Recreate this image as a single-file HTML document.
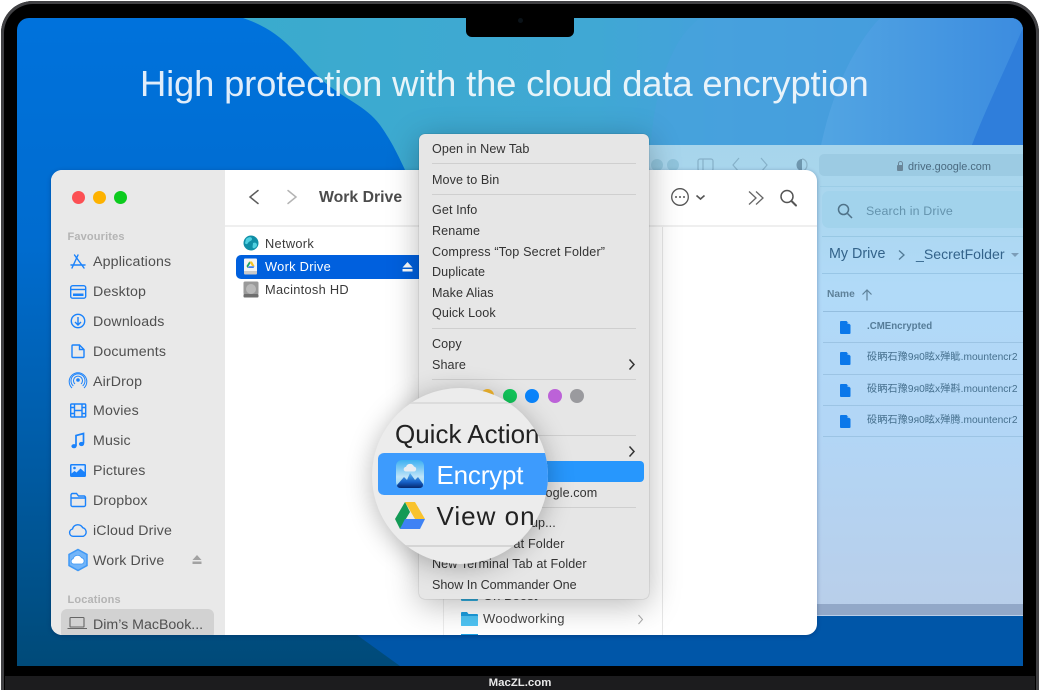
<!DOCTYPE html>
<html><head><meta charset="utf-8"><style>
html,body{margin:0;padding:0;background:#fff}
#p{position:relative;width:1040px;height:690px;overflow:hidden;background:#fff;font-family:"Liberation Sans","Noto Sans CJK SC",sans-serif;filter:blur(.3px)}
#p div,#p svg{position:absolute}
.t{white-space:nowrap;line-height:20px;height:20px}
.s{left:93px;font-size:14.2px;color:#505050;letter-spacing:.15px}
.m{left:432px;font-size:12.6px;color:#333;letter-spacing:.07px}
.l{left:432px;width:204px;height:1px;background:#cfcfcf}
.f{left:867px;font-size:10.3px;color:#46708e}
.c{font-size:12.8px;color:#3a3a3a;left:265px;letter-spacing:.3px}
</style></head><body><div id="p">

<div style="left:1px;top:1px;width:1038px;height:700px;background:#000;border-radius:32px 32px 0 0;box-shadow:inset 0 0 0 3px #414144"></div>
<div style="left:5px;top:676px;width:1030px;height:14px;background:#1c1c1e"></div>
<div class="t" style="left:0;width:1040px;text-align:center;top:673px;color:#e8e8e8;font-size:11.4px;font-weight:bold">MacZL.com</div>

<svg style="left:17px;top:18px;border-radius:12px 12px 0 0" width="1006" height="648" viewBox="17 18 1006 648">
<defs>
<linearGradient id="a" x1="0" y1="0" x2="0" y2="1"><stop offset="0" stop-color="#0072dc"/><stop offset=".35" stop-color="#006ccf"/><stop offset=".65" stop-color="#005da9"/><stop offset="1" stop-color="#004a78"/></linearGradient>
<linearGradient id="b" x1="0" y1="0" x2="1" y2="0"><stop offset="0" stop-color="#3aabcd"/><stop offset=".45" stop-color="#40a8d4"/><stop offset=".62" stop-color="#44a0dc"/><stop offset="1" stop-color="#3a8ede"/></linearGradient>
<linearGradient id="g" x1="0" y1="0" x2="1" y2="0"><stop offset="0" stop-color="#52a5e2"/><stop offset="1" stop-color="#3c8ce0"/></linearGradient>
</defs>
<rect x="17" y="18" width="1006" height="648" fill="url(#a)"/>
<path d="M243 18C285 32 298 58 322 80C345 100 365 105 380 125C392 142 398 155 406 172L1023 172V18Z" fill="url(#b)"/>
<path d="M700 18C670 40 655 90 650 150H820C830 100 850 50 880 18Z" fill="#4aa2de" opacity=".6"/>
<path d="M880 18C850 50 830 100 820 150H970C985 110 1005 70 1023 30V18Z" fill="url(#g)"/>
<path d="M1023 28C1005 70 985 110 970 150H1023Z" fill="#2f7edb"/>
<path d="M357 635L400 666H1023V600H340Z" fill="#0056a8"/>
</svg>

<div style="left:466px;top:18px;width:108px;height:19px;background:#000;border-radius:0 0 6px 6px"></div>
<div style="left:518px;top:18px;width:5px;height:5px;border-radius:50%;background:#0a1218"></div>

<div class="t" style="left:140px;top:64px;height:40px;line-height:40px;font-size:36.4px;color:#fff;letter-spacing:-.17px;opacity:.88">High protection with the cloud data encryption</div>

<!-- browser -->
<div style="left:640px;top:145px;width:383px;height:471px;background:linear-gradient(180deg,#a7d5ec 0,#a9d6ed 8%,#b1daf8 30%,#b2d6f6 60%,#b9cee9 100%)"></div>
<div style="left:817px;top:604px;width:206px;height:11px;background:#92a8c8"></div>
<div style="left:651px;top:159px;width:12px;height:12px;border-radius:50%;background:#90c4dc"></div>
<div style="left:667px;top:159px;width:12px;height:12px;border-radius:50%;background:#90c4dc"></div>
<svg style="left:690px;top:155px" width="130" height="22" viewBox="690 155 130 22" fill="none" stroke="#86b1c8" stroke-width="1.2"><rect x="698" y="159" width="15" height="12" rx="2"/><path d="M703 159V171M739 158l-6 7 6 7M761 158l6 7-6 7"/><path d="M802 159a5.500 6 0 0 0 0 12z" fill="#6f97ae" stroke="none"/><path d="M802 159a5 6 0 0 1 0 12" stroke="#8bb3c8"/></svg>
<div style="left:819px;top:154px;width:204px;height:22px;background:#9ccbe3;border-radius:5px 0 0 5px"></div>
<div style="left:897px;top:165px;width:6px;height:6px;background:#6a8699;border-radius:1px"></div>
<svg style="left:897px;top:160px" width="7" height="7" fill="none" stroke="#6a8699"><path d="M1.500 6V3.500a2 2 0 0 1 4 0V6"/></svg>
<div class="t" style="left:908px;top:156.500px;font-size:10.900px;color:#4a6a80;letter-spacing:0">drive.google.com</div>
<div style="left:820px;top:186px;width:203px;height:1px;background:#9ccde6"></div>
<div style="left:822px;top:191px;width:201px;height:37px;background:#a2d3ec;border-radius:7px 0 0 7px"></div>
<svg style="left:836px;top:202px" width="18" height="18" fill="none" stroke="#4f7288" stroke-width="1.500"><circle cx="7.500" cy="7.500" r="5"/><path d="M11.500 11.500L16 16"/></svg>
<div class="t" style="left:866px;top:201px;font-size:12.400px;color:#6493ad;letter-spacing:.15px">Search in Drive</div>
<div style="left:822px;top:236px;width:201px;height:1px;background:#98c8e4"></div>
<div class="t" style="left:829px;top:244px;font-size:14.300px;color:#33638a">My Drive</div>
<svg style="left:897px;top:248.500px" width="10" height="12" fill="none" stroke="#527b96" stroke-width="1.300"><path d="M2 1.500L7 6 2 10.500"/></svg>
<div class="t" style="left:916px;top:244px;font-size:14.100px;color:#33638a">_SecretFolder</div>
<div style="left:1011px;top:253px;width:0;height:0;border:4px solid transparent;border-top-color:#7c9db8;border-bottom:0"></div>
<div style="left:822px;top:273px;width:201px;height:1px;background:#98c6e6"></div>
<div class="t" style="left:827px;top:285px;font-size:10.200px;font-weight:bold;color:#5e8199">Name</div>
<svg style="left:861px;top:289px" width="12" height="12" fill="none" stroke="#5e8199" stroke-width="1.200"><path d="M6 11.500V1M1.500 5.500L6 1l4.500 4.500"/></svg>
<div style="left:823px;top:311px;width:200px;height:1px;background:#94bedf"></div>
<div style="left:823px;top:342px;width:200px;height:1px;background:#9cc4e4"></div>
<div style="left:823px;top:374px;width:200px;height:1px;background:#9cc4e4"></div>
<div style="left:823px;top:405px;width:200px;height:1px;background:#9cc4e4"></div>
<div style="left:823px;top:436px;width:200px;height:1px;background:#9cc4e4"></div>
<svg style="left:840px;top:321px" width="11" height="13"><path d="M1 0H6.500L10.500 4V12a1 1 0 0 1-1 1H1a1 1 0 0 1-1-1V1a1 1 0 0 1 1-1Z" fill="#0b78ea"/><path d="M7.500 1V3H9.500Z" fill="#8fc4f2"/></svg>
<svg style="left:840px;top:352px" width="11" height="13"><path d="M1 0H6.500L10.500 4V12a1 1 0 0 1-1 1H1a1 1 0 0 1-1-1V1a1 1 0 0 1 1-1Z" fill="#0b78ea"/><path d="M7.500 1V3H9.500Z" fill="#8fc4f2"/></svg>
<svg style="left:840px;top:384px" width="11" height="13"><path d="M1 0H6.500L10.500 4V12a1 1 0 0 1-1 1H1a1 1 0 0 1-1-1V1a1 1 0 0 1 1-1Z" fill="#0b78ea"/><path d="M7.500 1V3H9.500Z" fill="#8fc4f2"/></svg>
<svg style="left:840px;top:415px" width="11" height="13"><path d="M1 0H6.500L10.500 4V12a1 1 0 0 1-1 1H1a1 1 0 0 1-1-1V1a1 1 0 0 1 1-1Z" fill="#0b78ea"/><path d="M7.500 1V3H9.500Z" fill="#8fc4f2"/></svg>
<div class="t f" style="top:317px;font-weight:bold;font-size:9.700px;color:#557c98">.CMEncrypted</div>
<div class="t f" style="top:348px;font-size:10.200px;letter-spacing:.03px">砓眪石豫9я0眩x殚眦.mountencr2</div>
<div class="t f" style="top:380px;font-size:10.200px;letter-spacing:.03px">砓眪石豫9я0眩x殚斟.mountencr2</div>
<div class="t f" style="top:411px;font-size:10.200px;letter-spacing:.03px">砓眪石豫9я0眩x殚腾.mountencr2</div>

<!-- finder window -->
<div style="left:51px;top:170px;width:766px;height:465px;background:#fff;border-radius:11px;overflow:hidden;box-shadow:0 1px 4px rgba(0,30,80,.35)">
 <div style="left:0;top:0;width:174px;height:465px;background:#e9e9e9"></div>
 <div style="left:174px;top:55px;width:592px;height:2px;background:#efefef"></div>
 <div style="left:392px;top:57px;width:1px;height:408px;background:#ececec"></div>
 <div style="left:611px;top:57px;width:1px;height:408px;background:#e6e6e6"></div>
 <div style="left:10px;top:439px;width:153px;height:30px;background:#d2d2d2;border-radius:6px"></div>
</div>
<div style="left:72px;top:191px;width:13px;height:13px;border-radius:50%;background:#fc5054"></div>
<div style="left:93px;top:191px;width:13px;height:13px;border-radius:50%;background:#fdb200"></div>
<div style="left:114px;top:191px;width:13px;height:13px;border-radius:50%;background:#0ccb1e"></div>

<div class="t" style="left:67.500px;top:226.500px;font-size:11px;font-weight:bold;color:#b4b4b4;letter-spacing:.15px">Favourites</div>
<div class="t" style="left:67.500px;top:589.500px;font-size:11px;font-weight:bold;color:#b4b4b4;letter-spacing:.15px">Locations</div>
<div class="t s" style="top:251.500px">Applications</div>
<div class="t s" style="top:281.500px">Desktop</div>
<div class="t s" style="top:311.500px">Downloads</div>
<div class="t s" style="top:341.500px">Documents</div>
<div class="t s" style="top:371.500px">AirDrop</div>
<div class="t s" style="top:401px">Movies</div>
<div class="t s" style="top:431px">Music</div>
<div class="t s" style="top:461px">Pictures</div>
<div class="t s" style="top:490.500px">Dropbox</div>
<div class="t s" style="top:520.500px">iCloud Drive</div>
<div class="t s" style="top:550.500px">Work Drive</div>
<div class="t s" style="top:614.500px;letter-spacing:0">Dim’s MacBook...</div>

<svg style="left:66px;top:250px" width="26" height="325" viewBox="66 250 26 325" fill="none" stroke="#1a82fb" stroke-width="1.400">
<path d="M78 255L72 268M74.500 255L84 268M71 265H85" stroke-linecap="round"/>
<rect x="70.700" y="285.700" width="15" height="12.500" rx="2"/><path d="M71 289.500H85.500"/><rect x="73" y="293.500" width="10.500" height="2.500" fill="#1a82fb" stroke="none"/>
<circle cx="78" cy="321" r="6.700"/><path d="M78 317V324.500M75 322l3 3 3-3"/>
<path d="M73 345H79.500L84 349.500V356.500a1 1 0 0 1-1 1H73a1 1 0 0 1-1-1V346a1 1 0 0 1 1-1ZM79.500 345V349.500H84"/>
<circle cx="78" cy="380" r="1.800" fill="#1a82fb" stroke="none"/>
<path d="M75 384a4.500 4.500 0 1 1 6 0M73.300 386a7 7 0 1 1 9.400 0M72 388a8.800 8.800 0 1 1 12 0" stroke-width="1"/>
<rect x="70.700" y="404" width="15" height="13" rx="1"/><path d="M74.500 404V417M82 404V417M74.500 410.500H82M71 407.500H74.500M71 413.500H74.500M82 407.500H85.500M82 413.500H85.500"/>
<path d="M76 446V435.500L83.500 433.500V443.500" stroke-width="1.700"/><ellipse cx="74" cy="446.200" rx="2.600" ry="2.100" fill="#1a82fb" stroke="none"/><ellipse cx="81.500" cy="444" rx="2.600" ry="2.100" fill="#1a82fb" stroke="none"/>
<rect x="70" y="464" width="16" height="13" rx="1.500" fill="#1a82fb" stroke="none"/><path d="M71.500 465.500H84.500V472L80.500 468.500 76.500 472.500 74.500 471 71.500 473.500Z" fill="#dbe9fb" stroke="none"/><circle cx="74.500" cy="468" r="1.300" fill="#1a82fb" stroke="none"/>
<path d="M71 495a1.500 1.500 0 0 1 1.500-1.500H76.500L78.500 496H84a1.500 1.500 0 0 1 1.500 1.500V505a1.500 1.500 0 0 1-1.500 1.500H72.500A1.500 1.500 0 0 1 71 505ZM71 498H85.500"/>
<path d="M73 536.300a3.700 3.700 0 0 1-.500-7.300 5.500 5.500 0 0 1 10.200-1.300 4.500 4.500 0 0 1 .500 8.600Z"/>
<path d="M78 549.500L87 554.500V565.500L78 570.500 69 565.500V554.500Z" fill="#73b5f8" stroke="#3f98f5" stroke-width="1.500"/>
<path d="M73.500 564a2.700 2.700 0 0 1-.300-5.300 4.500 4.500 0 0 1 8.300-1 3.300 3.300 0 0 1 .500 6.300Z" fill="#fff" stroke="#3f98f5" stroke-width=".8"/>
</svg>
<svg style="left:192px;top:555px" width="10" height="10"><path d="M5 0L9.500 5H.5Z M.5 6.500H9.500V9H.5Z" fill="#a2a2a2"/></svg>
<svg style="left:67px;top:616px" width="22" height="14" fill="none" stroke="#666" stroke-width="1.100"><rect x="3" y="1.500" width="14" height="9.500" rx=".8"/><path d="M.5 12.500H20"/></svg>

<!-- toolbar -->
<svg style="left:245px;top:186px" width="60" height="22" fill="none" stroke-width="1.500" stroke-linecap="round"><path d="M13 4.500L5 11 13 17.500" stroke="#5c5c5c"/><path d="M43 4.500L51 11 43 17.500" stroke="#b4b4b4"/></svg>
<div class="t" style="left:319px;top:187.500px;font-size:15.800px;font-weight:bold;color:#4c4c4c">Work Drive</div>
<svg style="left:668px;top:184px" width="44" height="26" fill="none" stroke="#555" stroke-width="1.300"><circle cx="12" cy="13" r="8.300"/><circle cx="8" cy="13" r="1" fill="#555" stroke="none"/><circle cx="12" cy="13" r="1" fill="#555" stroke="none"/><circle cx="16" cy="13" r="1" fill="#555" stroke="none"/><path d="M28.500 11.500L32.500 15 36.500 11.500" stroke-width="1.600"/></svg>
<svg style="left:746px;top:187px" width="54" height="22" fill="none" stroke="#666" stroke-width="1.300"><path d="M3 4.500L10 11 3 17.500M10 4.500L17 11 10 17.500"/><circle cx="41" cy="9.500" r="6" stroke="#555" stroke-width="1.500"/><path d="M45.500 14L50 18.500" stroke="#555" stroke-width="2" stroke-linecap="round"/></svg>

<!-- column 1 -->
<svg style="left:243px;top:235px" width="16" height="16"><circle cx="8" cy="8" r="7.500" fill="#0f8ea6"/><path d="M3 4c3-3 6-2 6 0s-3 2-4 4-3 1-3 0zM10 8c2-1 4 0 4 2s-3 4-4 3 0-3 0-5z" fill="#4fd0e0"/></svg>
<div class="t c" style="top:233.500px">Network</div>
<div style="left:236px;top:255px;width:200px;height:24px;background:#0060de;border-radius:5px"></div>
<svg style="left:243px;top:258px" width="15" height="17"><path d="M1 1.500a1 1 0 0 1 1-1h11a1 1 0 0 1 1 1V14H1Z" fill="#f4f4f4"/><path d="M1 13h13v2.500a1 1 0 0 1-1 1H2a1 1 0 0 1-1-1Z" fill="#c9c9c9"/><path d="M6.300 3.500L3.500 8 4.500 10 7.500 5Z" fill="#1ea362"/><path d="M6.300 3.500H9L11.500 8H9Z" fill="#f7c325"/><path d="M6 8.300H11.500L10.500 10H4.800Z" fill="#3f7ff0"/></svg>
<div class="t c" style="top:257px;color:#fff">Work Drive</div>
<svg style="left:402px;top:262px" width="11" height="10"><path d="M5.500 0L10.500 5.500H.5Z M.5 7H10.500V9.500H.5Z" fill="#fff"/></svg>
<svg style="left:243px;top:281px" width="16" height="17"><rect x=".5" y=".5" width="15" height="13" rx="1.500" fill="#9a9a9a"/><circle cx="8" cy="8" r="5" fill="#b9b9b9"/><rect x=".5" y="13" width="15" height="3.500" rx="1" fill="#6f6f6f"/></svg>
<div class="t c" style="top:280px">Macintosh HD</div>

<!-- column 2 -->
<svg style="left:461px;top:585px" width="18" height="17"><path d="M0 3a1 1 0 0 1 1-1h5l1.500 2H16a1 1 0 0 1 1 1V15a1 1 0 0 1-1 1H1a1 1 0 0 1-1-1Z" fill="#32aee0"/></svg>
<div class="t" style="left:483px;top:586px;font-size:13px;color:#444">On Boost</div>
<svg style="left:461px;top:611px" width="18" height="16"><path d="M0 2a1 1 0 0 1 1-1h5l1.500 2H16a1 1 0 0 1 1 1V14a1 1 0 0 1-1 1H1a1 1 0 0 1-1-1Z" fill="#1b9ee0"/><path d="M0 5H17V14a1 1 0 0 1-1 1H1a1 1 0 0 1-1-1Z" fill="#4fc4f4"/></svg>
<div class="t" style="left:483px;top:609px;font-size:13px;color:#444;letter-spacing:.3px">Woodworking</div>
<svg style="left:637px;top:614px" width="7" height="11" fill="none" stroke="#aaa" stroke-width="1"><path d="M1.500 1L5.500 5.500 1.500 10"/></svg>
<div style="left:461px;top:634px;width:17px;height:1px;background:#1b9ee0"></div>

<!-- menu -->
<div style="left:419px;top:134px;width:230px;height:465px;background:#e6e6e6;border-radius:6px;box-shadow:0 6px 32px rgba(0,0,0,.28),0 0 1px rgba(0,0,0,.4)"></div>
<div class="t m" style="top:139px">Open in New Tab</div><div class="l" style="top:163px"></div>
<div class="t m" style="top:169.500px">Move to Bin</div><div class="l" style="top:194px"></div>
<div class="t m" style="top:200px">Get Info</div>
<div class="t m" style="top:220.500px">Rename</div>
<div class="t m" style="top:241.500px;letter-spacing:.16px">Compress “Top Secret Folder”</div>
<div class="t m" style="top:262px">Duplicate</div>
<div class="t m" style="top:282.500px">Make Alias</div>
<div class="t m" style="top:303px">Quick Look</div><div class="l" style="top:327.500px"></div>
<div class="t m" style="top:334px">Copy</div>
<div class="t m" style="top:354.500px">Share</div><div class="l" style="top:379px"></div>
<svg style="left:628px;top:358px" width="8" height="13" fill="none" stroke="#333" stroke-width="1.500"><path d="M1.500 1.500L6 6.500 1.500 11.500"/></svg>
<div style="left:481px;top:389px;width:13px;height:13px;border-radius:50%;background:#f5b82e"></div>
<div style="left:503px;top:389px;width:14px;height:14px;border-radius:50%;background:#12c75b"></div>
<div style="left:525px;top:389px;width:14px;height:14px;border-radius:50%;background:#0a84fb"></div>
<div style="left:548px;top:389px;width:14px;height:14px;border-radius:50%;background:#bc62d8"></div>
<div style="left:570px;top:389px;width:14px;height:14px;border-radius:50%;background:#9a9a9e"></div>
<div class="l" style="top:435px"></div>
<svg style="left:628px;top:445px" width="8" height="13" fill="none" stroke="#333" stroke-width="1.500"><path d="M1.500 1.500L6 6.500 1.500 11.500"/></svg>
<div style="left:424px;top:461px;width:220px;height:21px;background:#2797fd;border-radius:4px"></div>
<div class="t m" style="left:451px;top:482.500px;letter-spacing:.1px">View on drive.google.com</div><div class="l" style="top:507px"></div>
<div class="t m" style="left:451px;top:513px">Dropbox Backup...</div>
<div class="t m" style="top:533.500px;letter-spacing:.15px">New Terminal at Folder</div>
<div class="t m" style="top:554px">New Terminal Tab at Folder</div>
<div class="t m" style="top:575px;letter-spacing:-.05px">Show In Commander One</div>

<!-- magnifier -->
<div style="left:372px;top:388px;width:176px;height:176px;border-radius:50%;background:#ececec;overflow:hidden;box-shadow:0 4px 26px rgba(0,0,0,.28)">
 <div style="left:0;top:14px;width:176px;height:2px;background:#dcdcdc"></div>
 <div style="left:0;top:157px;width:176px;height:2px;background:#d5d5d5"></div>
 <div class="t" style="left:23px;top:26px;height:40px;line-height:40px;font-size:26px;color:#222;letter-spacing:0">Quick Action</div>
 <div style="left:6px;top:64.500px;width:180px;height:42px;background:#3d9bfd;border-radius:6px"></div>
 <div class="t" style="left:64.500px;top:66.500px;height:40px;line-height:40px;font-size:26px;color:#fff;letter-spacing:-.2px">Encrypt</div>
 <div class="t" style="left:64.500px;top:107.500px;height:40px;line-height:40px;font-size:26px;color:#222;letter-spacing:1px">View on g</div>
 <svg style="left:24px;top:72px" width="28" height="28"><defs><linearGradient id="e" x1="0" y1="0" x2="0" y2="1"><stop offset="0" stop-color="#3cb0f2"/><stop offset=".6" stop-color="#bfe4f8"/><stop offset="1" stop-color="#8ad0f4"/></linearGradient><linearGradient id="e2" x1="0" y1="0" x2="0" y2="1"><stop offset="0" stop-color="#5ab4f0"/><stop offset=".6" stop-color="#1660c8"/><stop offset="1" stop-color="#06286e"/></linearGradient></defs><rect width="28" height="28" rx="6" fill="url(#e)"/><path d="M10 11.500a2.300 2.300 0 0 1 0-4.600 4.200 4.200 0 0 1 8-.300 2.500 2.500 0 0 1 .300 4.900Z" fill="#e9edf2"/><path d="M1 25L8 17 11 20 14 13 19 20 22 17 27 24V25Q27 28 23 28H5Q1 28 1 25Z" fill="url(#e2)"/></svg>
 <svg style="left:23px;top:114px" width="30" height="27" viewBox="0 0 30 27"><path d="M10 0L0 17 5 27 15 10Z" fill="#139a56"/><path d="M10 0H20L30 17H20Z" fill="#f9c32e"/><path d="M10 17H30L25 27H5Z" fill="#3f82f4"/></svg>
</div>

</div></body></html>
